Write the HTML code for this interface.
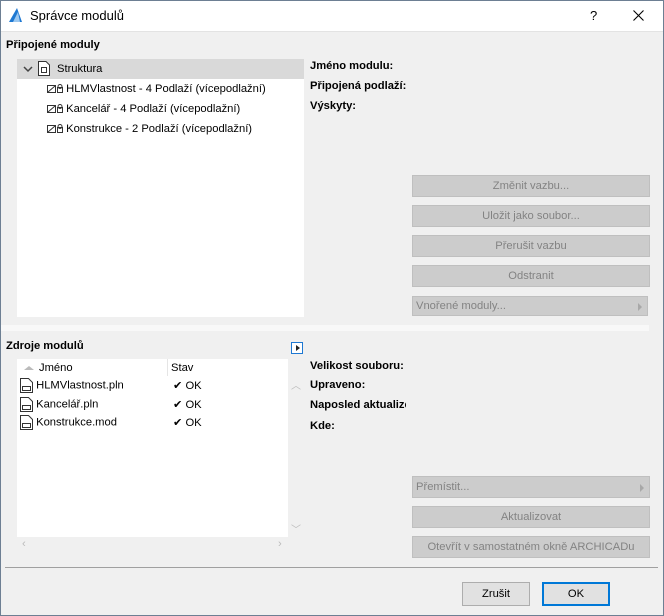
<!DOCTYPE html>
<html><head><meta charset="utf-8"><style>
*{margin:0;padding:0;box-sizing:border-box}
body{width:664px;height:616px;background:#f0f0f0;font-family:"Liberation Sans","DejaVu Sans",sans-serif;font-size:11.2px;color:#000;position:relative;overflow:hidden}
.a{position:absolute;white-space:nowrap}
.b{font-weight:bold}
.btn{position:absolute;background:#cccccc;border:1px solid #bfbfbf;color:#838383;text-align:center;line-height:20px;font-size:11.2px}
.btn.l{text-align:left;padding-left:3px}
.btn .tri{position:absolute;right:5px;top:6px;width:0;height:0;border-left:4px solid #a8a8a8;border-top:4px solid transparent;border-bottom:4px solid transparent}
.ic{display:inline-block;vertical-align:middle}
</style></head><body>
<div class="a" style="left:0;top:0;width:664px;height:32px;background:#fff;border-bottom:1px solid #e3e3e3"></div>
<svg class="a" style="left:8px;top:7px" width="15" height="16"><path d="M1 15 L9 1 L14 15 Z" fill="#1e78d2"/><path d="M5 15 L10 5 L12 15Z" fill="#9cc8f0"/></svg>
<div class="a" style="left:30px;top:8px;font-size:13px">Správce modulů</div>
<div class="a" style="left:590px;top:8px;font-size:13px">?</div>
<svg class="a" style="left:633px;top:10px" width="11" height="11"><path d="M0.5 0.5L10.5 10.5M10.5 0.5L0.5 10.5" stroke="#000" stroke-width="1.1"/></svg>

<div class="a b" style="left:6px;top:39px">Připojené moduly</div>
<div class="a" style="left:17px;top:59px;width:287px;height:258px;background:#fff"></div>
<div class="a" style="left:17px;top:59px;width:287px;height:20px;background:#d9d9d9"></div>
<svg class="a" style="left:23px;top:66px" width="10" height="7"><path d="M1 1L5 5L9 1" stroke="#444" stroke-width="1.5" fill="none"/></svg>
<svg class="a" style="left:38px;top:61px" width="12" height="15"><path d="M0.5 0.5H8L11.5 4V14.5H0.5Z" fill="#fff" stroke="#333"/><rect x="3.5" y="6.5" width="5" height="5" fill="none" stroke="#333"/></svg>
<div class="a" style="left:57px;top:63px">Struktura</div>
<div class="a" style="left:47px;top:83px"><svg class="ic" width="16" height="10"><rect x="0.5" y="1.5" width="8" height="7" fill="none" stroke="#333"/><path d="M1 8L8 2" stroke="#333"/><rect x="10.5" y="3.5" width="5" height="5" fill="none" stroke="#333"/><circle cx="13" cy="2.5" r="2" fill="none" stroke="#333"/></svg> HLMVlastnost - 4 Podlaží (vícepodlažní)</div>
<div class="a" style="left:47px;top:103px"><svg class="ic" width="16" height="10"><rect x="0.5" y="1.5" width="8" height="7" fill="none" stroke="#333"/><path d="M1 8L8 2" stroke="#333"/><rect x="10.5" y="3.5" width="5" height="5" fill="none" stroke="#333"/><circle cx="13" cy="2.5" r="2" fill="none" stroke="#333"/></svg> Kancelář - 4 Podlaží (vícepodlažní)</div>
<div class="a" style="left:47px;top:123px"><svg class="ic" width="16" height="10"><rect x="0.5" y="1.5" width="8" height="7" fill="none" stroke="#333"/><path d="M1 8L8 2" stroke="#333"/><rect x="10.5" y="3.5" width="5" height="5" fill="none" stroke="#333"/><circle cx="13" cy="2.5" r="2" fill="none" stroke="#333"/></svg> Konstrukce - 2 Podlaží (vícepodlažní)</div>

<div class="a b" style="left:310px;top:60px">Jméno modulu:</div>
<div class="a b" style="left:310px;top:80px">Připojená podlaží:</div>
<div class="a b" style="left:310px;top:100px">Výskyty:</div>

<div class="btn" style="left:412px;top:175px;width:238px;height:22px">Změnit vazbu...</div>
<div class="btn" style="left:412px;top:205px;width:238px;height:22px">Uložit jako soubor...</div>
<div class="btn" style="left:412px;top:235px;width:238px;height:22px">Přerušit vazbu</div>
<div class="btn" style="left:412px;top:265px;width:238px;height:22px">Odstranit</div>
<div class="btn l" style="left:412px;top:296px;width:236px;height:20px;line-height:18px">Vnořené moduly...<span class="tri"></span></div>
<div class="a" style="left:0;top:325px;width:649px;height:6px;background:#f8f8f8"></div>

<div class="a b" style="left:6px;top:340px">Zdroje modulů</div>
<div class="a" style="left:291px;top:342px;width:12px;height:12px;background:#fff;border:1px solid #1e78d2"></div>
<div class="a" style="left:296px;top:345px;width:0;height:0;border-left:4px solid #222;border-top:3px solid transparent;border-bottom:3px solid transparent"></div>
<div class="a" style="left:17px;top:359px;width:271px;height:178px;background:#fff"></div>
<div class="a" style="left:167px;top:359px;width:1px;height:17px;background:#e5e5e5"></div>
<div class="a" style="left:24px;top:366px;width:0;height:0;border-bottom:4px solid #bbb;border-left:5px solid transparent;border-right:5px solid transparent"></div>
<div class="a" style="left:39px;top:362px">Jméno</div>
<div class="a" style="left:171px;top:362px">Stav</div>
<div class="a" style="left:20px;top:378px"><svg class="ic" width="13" height="15"><path d="M0.5 0.5H8.5L12.5 4.5V14.5H0.5Z" fill="#fff" stroke="#333"/><rect x="2.5" y="8.5" width="8" height="4" fill="none" stroke="#333"/></svg> HLMVlastnost.pln</div>
<div class="a" style="left:20px;top:397px"><svg class="ic" width="13" height="15"><path d="M0.5 0.5H8.5L12.5 4.5V14.5H0.5Z" fill="#fff" stroke="#333"/><rect x="2.5" y="8.5" width="8" height="4" fill="none" stroke="#333"/></svg> Kancelář.pln</div>
<div class="a" style="left:20px;top:415px"><svg class="ic" width="13" height="15"><path d="M0.5 0.5H8.5L12.5 4.5V14.5H0.5Z" fill="#fff" stroke="#333"/><rect x="2.5" y="8.5" width="8" height="4" fill="none" stroke="#333"/></svg> Konstrukce.mod</div>
<div class="a" style="left:173px;top:379px">✔ OK</div>
<div class="a" style="left:173px;top:398px">✔ OK</div>
<div class="a" style="left:173px;top:416px">✔ OK</div>
<div class="a" style="left:291px;top:377px;color:#bbb;font-size:10px">︿</div>
<div class="a" style="left:291px;top:521px;color:#bbb;font-size:10px">﹀</div>
<div class="a" style="left:22px;top:538px;color:#bbb">‹</div>
<div class="a" style="left:278px;top:538px;color:#bbb">›</div>

<div class="a b" style="left:310px;top:360px">Velikost souboru:</div>
<div class="a b" style="left:310px;top:379px">Upraveno:</div>
<div class="a b" style="left:310px;top:399px;width:96px;overflow:hidden">Naposled aktualizováno:</div>
<div class="a b" style="left:310px;top:420px">Kde:</div>

<div class="btn l" style="left:412px;top:476px;width:238px;height:22px">Přemístit...<span class="tri" style="top:7px"></span></div>
<div class="btn" style="left:412px;top:506px;width:238px;height:22px">Aktualizovat</div>
<div class="btn" style="left:412px;top:536px;width:238px;height:22px">Otevřít v samostatném okně ARCHICADu</div>
<div class="a" style="left:5px;top:567px;width:653px;height:1px;background:#a0a0a0"></div>
<div class="btn" style="left:462px;top:582px;width:68px;height:24px;line-height:22px;background:#e1e1e1;border-color:#adadad;color:#000">Zrušit</div>
<div class="btn" style="left:542px;top:582px;width:68px;height:24px;line-height:20px;background:#e1e1e1;border:2px solid #0078d7;color:#000">OK</div>
<div class="a" style="left:0;top:0;width:664px;height:616px;border:1px solid #6d7f93"></div>
</body></html>
